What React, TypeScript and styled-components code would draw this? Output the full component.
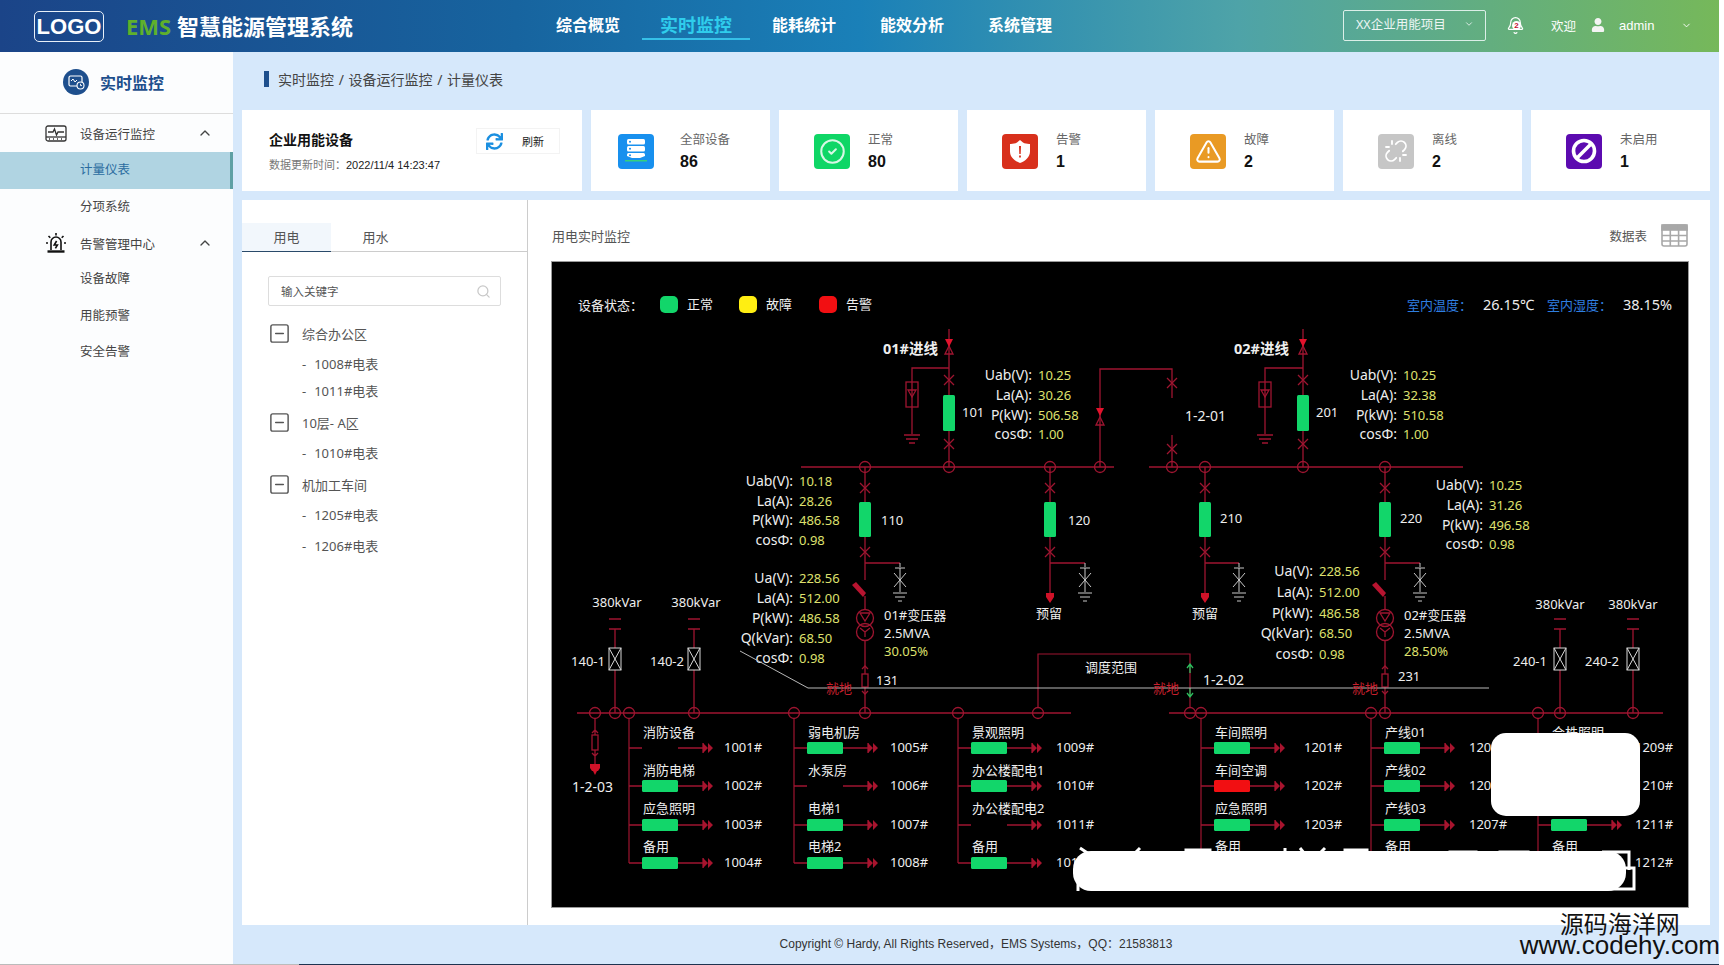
import React from 'react';
import styled, { createGlobalStyle } from 'styled-components';
import { Bell, ChevronDown, ChevronUp, CircleCheck, Search, SquareMinus, TriangleAlert, Unlink } from 'lucide-react';
import { FaSync, FaUser } from 'react-icons/fa';

const RED = '#9e1530';
const SANS = '"Noto Sans", "Noto Sans CJK SC", sans-serif';

const navItems = ['综合概览', '实时监控', '能耗统计', '能效分析', '系统管理'];

const ActivityIcon = () => (
    <svg width="22" height="17" viewBox="0 0 22 17" fill="none" stroke="#333" strokeWidth="1.3">
        <rect x="1" y="1" width="20" height="15" rx="2" />
        <path d="M1 12h20" />
        <path d="M3 7h5l1.5-3 2 6 1.5-3h6" />
        <path d="M4 14h1M8 14h1M12 14h1M16 14h1" />
    </svg>
);

const SirenIcon = () => (
    <svg width="22" height="22" viewBox="0 0 22 22" fill="none" stroke="#111" strokeWidth="1.6">
        <path d="M6 18V10a5 5 0 0 1 10 0v8" />
        <path d="M2.500 19.500h17" strokeWidth="2.400" />
        <path d="M11.600 9l-2.400 4h3.200l-2 3.400" />
        <path d="M11 1v2.500M3.500 4l1.800 1.800M18.500 4l-1.800 1.800M1 11h2M19 11h2" />
    </svg>
);

const GridIcon = () => (
    <svg width="27" height="23" viewBox="0 0 27 23" fill="none" stroke="#a8a8a8" strokeWidth="1.6">
        <rect x="1" y="1" width="25" height="21" rx="2" />
        <rect x="1" y="1" width="25" height="5" fill="#a8a8a8" />
        <path d="M9.300 1v21M17.600 1v21M1 11.500h25M1 17h25" />
    </svg>
);

const ServerIcon = () => (
    <svg width="22" height="26" viewBox="0 0 22 26" fill="#fff">
        <rect x="2" y="1" width="18" height="5.500" rx="1.500" />
        <rect x="2" y="8" width="18" height="5.500" rx="1.500" />
        <path d="M2 16.500a1.500 1.500 0 0 1 1.500-1.500h15a1.500 1.500 0 0 1 1.500 1.500V18l-5 2H7l-5-2z" />
        <rect x="0" y="22" width="22" height="1.500" fill="#35d07f" />
        <circle cx="5" cy="3.700" r="1" fill="#1890ee" />
        <circle cx="5" cy="10.700" r="1" fill="#1890ee" />
        <circle cx="5" cy="17.300" r="1" fill="#1890ee" />
    </svg>
);

const ShieldIcon = () => (
    <svg width="22" height="25" viewBox="0 0 22 25">
        <path d="M11 1l3 2.600c2 1.200 4.500 1.500 7 1.400v7.500C21 18 16.500 22 11 24 5.500 22 1 18 1 12.500V5c2.500.1 5-.2 7-1.400z" fill="#fff" />
        <path d="M10 7h2l-.3 8h-1.400zM10.100 16.500h1.800v2h-1.800z" fill="#d8301c" />
    </svg>
);

const BanIcon = () => (
    <svg width="26" height="26" viewBox="0 0 26 26" fill="none" stroke="#fff" strokeWidth="3.600">
        <circle cx="13" cy="13" r="10.500" />
        <path d="M6 20L20 6" />
    </svg>
);

const MonitorClockIcon = () => (
    <svg width="26" height="26" viewBox="0 0 26 26" fill="none">
        <circle cx="13" cy="13" r="13" fill="#1e4f8d" />
        <rect x="6" y="7" width="13" height="10" rx="1.500" stroke="#fff" strokeWidth="1.200" />
        <path d="M8 12l2-2 2 3 2-2" stroke="#fff" strokeWidth="1" />
        <circle cx="17.500" cy="16.500" r="3.500" fill="#1e4f8d" stroke="#fff" strokeWidth="1.100" />
        <path d="M17.500 14.800v1.800h1.500" stroke="#fff" strokeWidth=".9" />
    </svg>
);

const statCards: { label: string; value: number; color: string; icon: React.ReactNode }[] = [
    { label: '全部设备', value: 86, color: '#1890ee', icon: <ServerIcon /> },
    { label: '正常', value: 80, color: '#0fd666', icon: <CircleCheck size={27} color="#d8f7e5" strokeWidth={1.8} /> },
    { label: '告警', value: 1, color: '#d8301c', icon: <ShieldIcon /> },
    { label: '故障', value: 2, color: '#e99a24', icon: <TriangleAlert size={27} color="#fff" strokeWidth={1.8} /> },
    { label: '离线', value: 2, color: '#c6c6c6', icon: <Unlink size={24} color="#fff" strokeWidth={1.8} /> },
    { label: '未启用', value: 1, color: '#5c0bb0', icon: <BanIcon /> },
];

// ---- wiring diagram parts, coordinates are page pixels (see viewBox) ----

const Breaker = ({ x, y }: { x: number; y: number }) => (
    <path d={`M${x - 5} ${y - 5}L${x + 5} ${y + 5}M${x + 5} ${y - 5}L${x - 5} ${y + 5}`} />
);

const Node = ({ x, y = 713 }: { x: number; y?: number }) => (
    <circle cx={x} cy={y} r="5.500" fill="none" stroke={RED} strokeWidth="1.300" />
);

const StatusBar = ({ x, y, w, h, color = '#12d66a' }: { x: number; y: number; w: number; h: number; color?: string }) => (
    <rect x={x} y={y} width={w} height={h} rx="1.500" fill={color} stroke="none" />
);

const DataBlock = ({ right, rows }: { right: number; rows: [string, string, number][] }) => (
    <>
        {rows.map(([name, value, y]) => (
            <React.Fragment key={name}>
                <Txt x={right} y={y} textAnchor="end">{name}</Txt>
                <Txt x={right + 6} y={y} $size={13} $tone="#dfe06e">{value}</Txt>
            </React.Fragment>
        ))}
    </>
);

const Incoming = ({ x, side, title, titleEnd, tag }: { x: number; side: number; title: string; titleEnd: number; tag: string }) => (
    <>
        <g fill="none" stroke={RED} strokeWidth="1.300">
            <path d={`M${x} 329V467M${x} 368H${side}V434`} />
            <Breaker x={x} y={380} />
            <Breaker x={x} y={444} />
            <rect x={side - 6} y={382} width="12" height="25" />
            <path d={`M${side - 4} 390h8l-4 7z`} />
            <path d={`M${side - 8} 435h16M${side - 6} 439h12M${side - 3} 443h6`} />
            <path d={`M${x - 4} 354l4-8 4 8z`} />
        </g>
        <Node x={x} y={467} />
        <path d={`M${x - 4} 339h8l-4 8z`} fill="#e3122c" />
        <StatusBar x={x - 6} y={395} w={12} h={36} />
        <Txt x={titleEnd} y={354} textAnchor="end" $size={14.500} $bold>{title}</Txt>
        <Txt x={x + 13} y={417} $size={13}>{tag}</Txt>
    </>
);

const Feeder = ({ x, sw, tag, tagX, tagY, spare }: { x: number; sw: number; tag: string; tagX: number; tagY: number; spare?: boolean }) => (
    <>
        <g fill="none" stroke={RED} strokeWidth="1.300">
            <path d={`M${x} 467V${spare ? 595 : 580}M${x} 563H${sw}`} />
            <Breaker x={x} y={488} />
            <Breaker x={x} y={552} />
        </g>
        <Node x={x} y={467} />
        {spare && <path d={`M${x - 4} 593h8v4l-4 6-4-6z`} fill="#d01228" />}
        <g fill="none" stroke="#c9c9c9" strokeWidth="1">
            <path d={`M${sw} 563v4M${sw - 5} 568h10M${sw} 568v24`} />
            <path d={`M${sw - 6} 573L${sw + 6} 587M${sw + 6} 573L${sw - 6} 587`} />
            <path d={`M${sw - 7} 593h14M${sw - 5} 597h10M${sw - 2} 601h4`} />
        </g>
        <StatusBar x={x - 6} y={502} w={12} h={35} />
        <Txt x={tagX} y={tagY} $size={13}>{tag}</Txt>
    </>
);

const Transformer = ({ x, tag, load }: { x: number; tag: string; load: string }) => (
    <>
        <g fill="none" stroke={RED} strokeWidth="1.300">
            <circle cx={x} cy={618} r="8.500" />
            <circle cx={x} cy={632} r="8.500" />
            <path d={`M${x} 596V610M${x} 640V674M${x} 687V713`} />
            <path d={`M${x - 5} 613h10l-5 8zM${x} 632v5M${x} 632l-5-4M${x} 632l5-4`} />
            <rect x={x - 3} y={674} width="6" height="13" />
            <path d={`M${x - 3} 669l3-3 3 3M${x - 3} 691l3 3 3-3`} />
        </g>
        <Node x={x} />
        <path d={`M${x - 13} 585l4-3 10 11-3 4z`} fill="#b81430" />
        <Txt x={x + 19} y={620} $size={13}>{tag}</Txt>
        <Txt x={x + 19} y={638} $size={13}>2.5MVA</Txt>
        <Txt x={x + 19} y={656} $size={13} $tone="#dfe06e">{load}</Txt>
    </>
);

const Capacitor = ({ x, tag, tagEnd, labelX, labelY }: { x: number; tag: string; tagEnd: number; labelX: number; labelY: number }) => (
    <>
        <g fill="none" stroke={RED} strokeWidth="1.300">
            <path d={`M${x - 6} 619h12M${x - 6} 629h12M${x} 629V648M${x} 670V713`} />
        </g>
        <Node x={x} />
        <g fill="none" stroke="#d8d8d8" strokeWidth="1">
            <rect x={x - 6} y={648} width="12" height="22" />
            <path d={`M${x - 6} 648L${x + 6} 670M${x + 6} 648L${x - 6} 670`} />
        </g>
        <Txt x={labelX} y={labelY} textAnchor="middle" $size={13}>380kVar</Txt>
        <Txt x={tagEnd} y={666} textAnchor="end" $size={13}>{tag}</Txt>
    </>
);

type Load = { name?: string; no: string; off?: boolean; color?: string };

const rowY = [748, 786, 825, 863];
const nameY = [737, 775, 813, 851];

const LoadColumn = ({ x, loads, numX }: { x: number; loads: Load[]; numX: number }) => (
    <>
        <Node x={x} />
        <path d={`M${x} 718V${rowY[3]}`} fill="none" stroke={RED} strokeWidth="1.200" />
        {loads.map((load, i) => {
            const y = rowY[i];
            const bar = x + 13;
            return (
                <React.Fragment key={load.no}>
                    {load.name && <Txt x={bar + 1} y={nameY[i]} $size={13}>{load.name}</Txt>}
                    <path d={`M${x} ${y}h13M${bar + 36} ${y}H${bar + 64}M${bar + 61} ${y - 5}v10`} stroke={RED} strokeWidth="1.300" fill="none" />
                    <path d={`M${bar + 61} ${y - 5}l5 5-5 5zM${bar + 66} ${y - 5}l5 5-5 5z`} fill="#a8142e" />
                    {!load.off && <StatusBar x={bar} y={y - 6} w={36} h={12} color={load.color} />}
                    <Txt x={numX} y={y + 4} $size={13}>{load.no}</Txt>
                </React.Fragment>
            );
        })}
    </>
);

const Diagram = () => (
    <svg width="1136" height="645" viewBox="552 262 1136 645" style={{ display: 'block' }}>
        {/* legend */}
        <Txt x={578} y={310} $size={13}>{'设备状态\uFF1A'}</Txt>
        <rect x={660} y={296} width={18} height={17} rx={5} fill="#12d66a" />
        <Txt x={687} y={309} $size={13}>正常</Txt>
        <rect x={739} y={296} width={18} height={17} rx={5} fill="#ffee12" />
        <Txt x={766} y={309} $size={13}>故障</Txt>
        <rect x={819} y={296} width={18} height={17} rx={5} fill="#f20f12" />
        <Txt x={846} y={309} $size={13}>告警</Txt>

        <Txt x={1407} y={310} $size={13} $tone="#2f7fe0">{'室内温度\uFF1A'}</Txt>
        <Txt x={1483} y={310} $size={14.500}>26.15℃</Txt>
        <Txt x={1547} y={310} $size={13} $tone="#2f7fe0">{'室内湿度\uFF1A'}</Txt>
        <Txt x={1623} y={310} $size={14.500}>38.15%</Txt>

        {/* bus bars */}
        <path d="M801 467H1114M1149 467H1463M577 713H1071M1169 713H1663" stroke={RED} strokeWidth="1.500" fill="none" />

        <Incoming x={949} side={912} title="01#进线" titleEnd={938} tag="101" />
        <Incoming x={1303} side={1265} title="02#进线" titleEnd={1289} tag="201" />
        <DataBlock right={1032} rows={[['Uab(V):', '10.25', 380], ['La(A):', '30.26', 400], ['P(kW):', '506.58', 420], ['cosΦ:', '1.00', 439]]} />
        <DataBlock right={1397} rows={[['Uab(V):', '10.25', 380], ['La(A):', '32.38', 400], ['P(kW):', '510.58', 420], ['cosΦ:', '1.00', 439]]} />

        {/* bus tie */}
        <g fill="none" stroke={RED} strokeWidth="1.300">
            <path d="M1100 467V369H1172V398M1172 435V467" />
            <Breaker x={1172} y={383} />
            <Breaker x={1172} y={449} />
            <path d="M1096 425l4-8 4 8z" />
        </g>
        <Node x={1100} y={467} />
        <Node x={1172} y={467} />
        <path d="M1096 408h8l-4 8z" fill="#e3122c" />
        <Txt x={1185} y={421}>1-2-01</Txt>

        <Feeder x={865} sw={900} tag="110" tagX={881} tagY={525} />
        <Feeder x={1050} sw={1085} tag="120" tagX={1068} tagY={525} spare />
        <Feeder x={1205} sw={1239} tag="210" tagX={1220} tagY={523} spare />
        <Feeder x={1385} sw={1420} tag="220" tagX={1400} tagY={523} />
        <Txt x={1049} y={618} textAnchor="middle" $size={13}>预留</Txt>
        <Txt x={1205} y={618} textAnchor="middle" $size={13}>预留</Txt>

        <DataBlock right={793} rows={[['Uab(V):', '10.18', 486], ['La(A):', '28.26', 506], ['P(kW):', '486.58', 525], ['cosΦ:', '0.98', 545]]} />
        <DataBlock right={1483} rows={[['Uab(V):', '10.25', 490], ['La(A):', '31.26', 510], ['P(kW):', '496.58', 530], ['cosΦ:', '0.98', 549]]} />
        <DataBlock right={793} rows={[['Ua(V):', '228.56', 583], ['La(A):', '512.00', 603], ['P(kW):', '486.58', 623], ['Q(kVar):', '68.50', 643], ['cosΦ:', '0.98', 663]]} />
        <DataBlock right={1313} rows={[['Ua(V):', '228.56', 576], ['La(A):', '512.00', 597], ['P(kW):', '486.58', 618], ['Q(kVar):', '68.50', 638], ['cosΦ:', '0.98', 659]]} />

        <Transformer x={865} tag="01#变压器" load="30.05%" />
        <Txt x={876} y={685} $size={13}>131</Txt>
        <Transformer x={1385} tag="02#变压器" load="28.50%" />
        <Txt x={1398} y={681} $size={13}>231</Txt>

        {/* dispatch range */}
        <path d="M1038 708V654H1190V708" fill="none" stroke={RED} strokeWidth="1.200" />
        <Node x={1038} />
        <Node x={1190} />
        <Txt x={1085} y={672} $size={13}>调度范围</Txt>
        <path d="M1187 668l3-4 3 4M1190 664v9M1187 693l3 4 3-4M1190 688v9" fill="none" stroke="#2bbf5e" strokeWidth="1.300" />
        <Txt x={1203} y={685}>1-2-02</Txt>
        <path d="M740 651L808 688H1489" fill="none" stroke="#b8b8b8" strokeWidth="1" />
        <Txt x={826} y={693} $size={13} $tone="#c8202e">就地</Txt>
        <Txt x={1153} y={693} $size={13} $tone="#c8202e">就地</Txt>
        <Txt x={1352} y={693} $size={13} $tone="#c8202e">就地</Txt>

        <Capacitor x={615} tag="140-1" tagEnd={605} labelX={617} labelY={607} />
        <Capacitor x={694} tag="140-2" tagEnd={684} labelX={696} labelY={607} />
        <Capacitor x={1560} tag="240-1" tagEnd={1547} labelX={1560} labelY={609} />
        <Capacitor x={1633} tag="240-2" tagEnd={1619} labelX={1633} labelY={609} />

        {/* 1-2-03 */}
        <Node x={595} />
        <g fill="none" stroke={RED} strokeWidth="1.300">
            <path d="M595 718V735M595 750V765M592 733l3-3 3 3M592 753l3 3 3-3" />
            <rect x={592} y={735} width="6" height="15" />
        </g>
        <path d="M590 764h10v4l-2 3h-1l-2 4-2-4h-1l-2-3z" fill="#d01228" />
        <Txt x={572} y={792}>1-2-03</Txt>

        <LoadColumn
            x={629}
            numX={724}
            loads={[
                { name: '消防设备', no: '1001#', off: true },
                { name: '消防电梯', no: '1002#' },
                { name: '应急照明', no: '1003#' },
                { name: '备用', no: '1004#' },
            ]}
        />
        <LoadColumn
            x={794}
            numX={890}
            loads={[
                { name: '弱电机房', no: '1005#' },
                { name: '水泵房', no: '1006#', off: true },
                { name: '电梯1', no: '1007#' },
                { name: '电梯2', no: '1008#' },
            ]}
        />
        <LoadColumn
            x={958}
            numX={1056}
            loads={[
                { name: '景观照明', no: '1009#' },
                { name: '办公楼配电1', no: '1010#' },
                { name: '办公楼配电2', no: '1011#', off: true },
                { name: '备用', no: '1012#' },
            ]}
        />
        <LoadColumn
            x={1201}
            numX={1304}
            loads={[
                { name: '车间照明', no: '1201#' },
                { name: '车间空调', no: '1202#', color: '#f20f12' },
                { name: '应急照明', no: '1203#' },
                { name: '备用', no: '1204#' },
            ]}
        />
        <LoadColumn
            x={1371}
            numX={1469}
            loads={[
                { name: '产线01', no: '1205#' },
                { name: '产线02', no: '1206#' },
                { name: '产线03', no: '1207#' },
                { name: '备用', no: '1208#' },
            ]}
        />
        <LoadColumn
            x={1538}
            numX={1635}
            loads={[
                { name: '合株照明', no: '1209#' },
                { no: '1210#' },
                { no: '1211#' },
                { name: '备用', no: '1212#' },
            ]}
        />

        {/* smeared patches on the photographed screen */}
        <rect x={1491} y={733} width={149} height={83} rx={15} fill="#fff" />
        <g fill="none" stroke="#fff" strokeWidth="3">
            <path d="M1080 848l12 8M1140 848l-10 10M1186 853v-3h24v3M1285 848v8M1300 848l8 10M1325 848l-8 8M1345 855v-5h22v5M1450 856v-4h26v4M1500 856v-4h28v4M1602 852h27v18M1596 868h38v21h-38" />
            <path d="M1078 870v21" />
        </g>
        <rect x={1073} y={851} width={553} height={40} rx={18} fill="#fff" />
    </svg>
);

const App = (): JSX.Element => (
    <>
        <GlobalStyle />
        <Page>
            <Header>
                <Brand>
                    <LogoBox>LOGO</LogoBox>
                    <BrandTitle><em>EMS</em> 智慧能源管理系统</BrandTitle>
                </Brand>
                <Nav>
                    {navItems.map((item) => (
                        <NavItem key={item} $active={item === '实时监控'}>{item}</NavItem>
                    ))}
                </Nav>
                <HeaderRight>
                    <ProjectSelect>XX企业用能项目<ChevronDown size={10} /></ProjectSelect>
                    <BellWrap>
                        <Bell size={19} strokeWidth={1.5} color="#fff" />
                        <BellBadge>2</BellBadge>
                    </BellWrap>
                    <Welcome>欢迎</Welcome>
                    <FaUser size={14} color="#f4f4f4" />
                    <AdminName>admin</AdminName>
                    <AdminCaret><ChevronDown size={11} color="#fff" /></AdminCaret>
                </HeaderRight>
            </Header>

            <Body>
                <Sidebar>
                    <SideTitle><MonitorClockIcon />实时监控</SideTitle>
                    <MenuGroup $height={38}>
                        <ActivityIcon />
                        <span>设备运行监控</span>
                        <ChevronUp size={16} />
                    </MenuGroup>
                    <MenuItem $active>计量仪表</MenuItem>
                    <MenuItem>分项系统</MenuItem>
                    <MenuGroup $height={36}>
                        <SirenIcon />
                        <span>告警管理中心</span>
                        <ChevronUp size={16} />
                    </MenuGroup>
                    <MenuItem>设备故障</MenuItem>
                    <MenuItem>用能预警</MenuItem>
                    <MenuItem>安全告警</MenuItem>
                </Sidebar>

                <Content>
                    <Breadcrumb>实时监控 / 设备运行监控 / 计量仪表</Breadcrumb>

                    <Stats>
                        <SummaryCard>
                            <div>
                                <SummaryTitle>企业用能设备</SummaryTitle>
                                <SummaryTime>{'数据更新时间\uFF1A'}<b>2022/11/4 14:23:47</b></SummaryTime>
                            </div>
                            <RefreshButton><FaSync size={17} color="#1b8fe0" />刷新</RefreshButton>
                        </SummaryCard>
                        {statCards.map((card, i) => (
                            <StatCard key={card.label} $first={i === 0}>
                                <StatIcon $color={card.color}>{card.icon}</StatIcon>
                                <div>
                                    <StatLabel>{card.label}</StatLabel>
                                    <StatValue>{card.value}</StatValue>
                                </div>
                            </StatCard>
                        ))}
                    </Stats>

                    <Panel>
                        <TreePane>
                            <Tabs>
                                <Tab $active>用电</Tab>
                                <Tab>用水</Tab>
                            </Tabs>
                            <SearchBox>输入关键字<Search size={15} color="#c8c8c8" /></SearchBox>
                            <TreeList>
                                <TreeGroup><SquareMinus size={23} strokeWidth={1.5} />综合办公区</TreeGroup>
                                <TreeLeaf>1008#电表</TreeLeaf>
                                <TreeLeaf $tight>1011#电表</TreeLeaf>
                                <TreeGroup><SquareMinus size={23} strokeWidth={1.5} />10层- A区</TreeGroup>
                                <TreeLeaf>1010#电表</TreeLeaf>
                                <TreeGroup><SquareMinus size={23} strokeWidth={1.5} />机加工车间</TreeGroup>
                                <TreeLeaf>1205#电表</TreeLeaf>
                                <TreeLeaf>1206#电表</TreeLeaf>
                            </TreeList>
                        </TreePane>

                        <MonitorPane>
                            <MonitorHead>
                                <span>用电实时监控</span>
                                <TableLink>数据表<GridIcon /></TableLink>
                            </MonitorHead>
                            <DiagramFrame><Diagram /></DiagramFrame>
                        </MonitorPane>
                    </Panel>

                    <Footer>{'Copyright © Hardy, All Rights Reserved\uFF0CEMS Systems\uFF0CQQ\uFF1A21583813'}</Footer>
                </Content>
            </Body>
            <Watermark>
                <span>源码海洋网</span>
                <b>www.codehy.com</b>
            </Watermark>
        </Page>
    </>
);

const GlobalStyle = createGlobalStyle`
    html, body {
        margin: 0;
        padding: 0;
        background: #fff;
        overflow: hidden;
    }
    * {
        box-sizing: border-box;
    }
`;

const Page = styled.div`
    position: relative;
    width: 1724px;
    height: 965px;
    overflow: hidden;
    font-family: ${SANS};
    color: #444;
`;

const Header = styled.header`
    display: flex;
    align-items: center;
    width: 1719px;
    height: 52px;
    padding-left: 34px;
    background: linear-gradient(90deg, #1b4488 0%, #17649f 30%, #1a80b8 50%, #4ea3a8 72%, #76b85a 100%);
    color: #fff;
`;

const Brand = styled.div`
    display: flex;
    align-items: center;
    gap: 22px;
    width: 500px;
`;

const LogoBox = styled.div`
    width: 70px;
    height: 31px;
    border: 1px solid #e8f0f8;
    border-radius: 5px;
    font: bold 22px/29px "Liberation Sans", sans-serif;
    text-align: center;
`;

const BrandTitle = styled.div`
    padding-bottom: 3px;
    font-size: 22px;
    font-weight: 700;
    white-space: nowrap;

    em {
        font-style: normal;
        color: #5fb02c;
    }
`;

const Nav = styled.nav`
    display: flex;
    align-self: flex-start;
    width: 540px;
    margin-top: 13px;
`;

const NavItem = styled.div<{ $active?: boolean }>`
    width: 108px;
    height: 27px;
    font-size: ${(p) => (p.$active ? 18 : 16)}px;
    font-weight: 700;
    line-height: 24px;
    text-align: center;
    color: ${(p) => (p.$active ? '#2fcdec' : '#fff')};
    border-bottom: 2px solid ${(p) => (p.$active ? '#36c0e8' : 'transparent')};
`;

const HeaderRight = styled.div`
    display: flex;
    align-items: center;
    margin-left: 269px;
    padding-bottom: 2px;
`;

const ProjectSelect = styled.div`
    display: flex;
    align-items: center;
    justify-content: space-between;
    width: 143px;
    height: 31px;
    padding: 0 11px 3px 12px;
    border: 1px solid #dcefe8;
    border-radius: 2px;
    font-size: 12.500px;
    color: #eef6f4;
    white-space: nowrap;
`;

const BellWrap = styled.div`
    position: relative;
    display: flex;
    margin-left: 20px;
`;

const BellBadge = styled.span`
    position: absolute;
    left: 6px;
    top: 5px;
    width: 9px;
    height: 9px;
    border-radius: 50%;
    background: #fff;
    color: #c8102e;
    font: bold 8px/9px "Liberation Sans", sans-serif;
    text-align: center;
`;

const Welcome = styled.span`
    margin: 0 15px 0 26px;
    font-size: 12.500px;
`;

const AdminName = styled.span`
    margin-left: 14px;
    font: 13px "Liberation Sans", sans-serif;
`;

const AdminCaret = styled.span`
    display: flex;
    margin-left: 27px;
`;

const Body = styled.div`
    display: flex;
    width: 1719px;
    height: 913px;
`;

const Sidebar = styled.aside`
    flex: none;
    width: 233px;
    background: #fcfdfe;
    border-bottom: 1px solid #bbb;
`;

const SideTitle = styled.div`
    display: flex;
    align-items: center;
    gap: 11px;
    height: 62px;
    padding: 0 0 2px 63px;
    border-bottom: 1px solid #ddd;
    font-size: 16px;
    font-weight: 700;
    color: #1e4f8d;
`;

const MenuGroup = styled.div<{ $height: number }>`
    display: grid;
    grid-template-columns: 22px 1fr 16px;
    align-items: center;
    column-gap: 13px;
    height: ${(p) => p.$height}px;
    padding: 0 20px 0 45px;
    font-size: 12.500px;
    color: #444;
`;

const MenuItem = styled.div<{ $active?: boolean }>`
    height: 36.500px;
    padding-left: 80px;
    font-size: 12.500px;
    line-height: 36px;
    color: ${(p) => (p.$active ? '#2a6ca0' : '#444')};
    background: ${(p) => (p.$active ? '#b0d4e2' : 'transparent')};
    border-right: 3px solid ${(p) => (p.$active ? '#5fa0a5' : 'transparent')};
`;

const Content = styled.main`
    display: flex;
    flex-direction: column;
    flex: 1;
    padding: 0 9px;
    background: #d6e8fb;
`;

const Breadcrumb = styled.div`
    display: flex;
    align-items: center;
    height: 58px;
    padding: 0 0 4px 22px;
    font-size: 14px;
    word-spacing: 1px;
    color: #444;

    &::before {
        content: '';
        width: 5px;
        height: 16px;
        margin-right: 9px;
        background: #1e4f8d;
    }
`;

const Stats = styled.section`
    display: grid;
    grid-template-columns: 340px repeat(6, 179px);
    gap: 9px;
    height: 81px;
`;

const SummaryCard = styled.div`
    display: flex;
    justify-content: space-between;
    align-items: center;
    padding: 0 22px 0 27px;
    background: #fff;
`;

const SummaryTitle = styled.div`
    font-size: 14px;
    font-weight: 700;
    line-height: 19px;
    color: #111;
`;

const SummaryTime = styled.div`
    margin-top: 8px;
    font-size: 11px;
    line-height: 15px;
    color: #777;

    b {
        font: 11px "Liberation Sans", sans-serif;
        color: #222;
    }
`;

const RefreshButton = styled.div`
    display: flex;
    align-items: center;
    gap: 19px;
    width: 84px;
    height: 26px;
    padding-left: 9px;
    margin-bottom: 19px;
    border: 1px solid #f3f3f3;
    font-size: 11px;
    color: #222;
`;

const StatCard = styled.div<{ $first?: boolean }>`
    display: flex;
    align-items: center;
    gap: ${(p) => (p.$first ? 26 : 18)}px;
    padding-left: ${(p) => (p.$first ? 27 : 35)}px;
    background: #fff;
`;

const StatIcon = styled.div<{ $color: string }>`
    display: flex;
    align-items: center;
    justify-content: center;
    flex: none;
    width: 36px;
    height: 35px;
    margin-top: 1px;
    border-radius: 4px;
    background: ${(p) => p.$color};
`;

const StatLabel = styled.div`
    font-size: 12.500px;
    line-height: 17px;
    color: #666;
`;

const StatValue = styled.div`
    margin-top: 4px;
    font: bold 16px/19px "Liberation Sans", sans-serif;
    color: #111;
`;

const Panel = styled.section`
    display: flex;
    height: 725px;
    margin-top: 9px;
    background: #fff;
`;

const TreePane = styled.div`
    flex: none;
    width: 286px;
    padding-top: 23px;
    border-right: 1px solid #ccc;
    font-size: 13px;
    color: #555;
`;

const Tabs = styled.div`
    display: flex;
    height: 29px;
    margin-bottom: 24px;
    border-bottom: 1px solid #ccc;
`;

const Tab = styled.div<{ $active?: boolean }>`
    width: 89px;
    height: 29px;
    text-align: center;
    line-height: 28px;
    background: ${(p) => (p.$active ? '#f2f7fc' : 'transparent')};
    border-bottom: 1px solid ${(p) => (p.$active ? '#2a4a6a' : 'transparent')};
`;

const SearchBox = styled.div`
    display: flex;
    align-items: center;
    justify-content: space-between;
    width: 233px;
    height: 30px;
    margin-left: 26px;
    padding: 0 9px 0 12px;
    border: 1px solid #ddd;
    border-radius: 2px;
    font-size: 11.500px;
    color: #555;
`;

const TreeList = styled.div`
    margin-top: 12px;
`;

const TreeGroup = styled.div`
    display: flex;
    align-items: center;
    gap: 11px;
    height: 31px;
    padding-left: 26px;
    color: #555;
`;

const TreeLeaf = styled.div<{ $tight?: boolean }>`
    height: 31px;
    margin-top: ${(p) => (p.$tight ? -4 : 0)}px;
    padding-left: 60px;
    line-height: 31px;
    font-size: 13px;
    color: #555;

    &::before {
        content: '-';
        margin-right: 8px;
    }
`;

const MonitorPane = styled.div`
    flex: 1;
    padding: 0 22px 0 24px;
`;

const MonitorHead = styled.div`
    display: flex;
    align-items: center;
    justify-content: space-between;
    height: 62px;
    padding-top: 9px;
    font-size: 13px;
    color: #555;
`;

const TableLink = styled.div`
    display: flex;
    align-items: center;
    gap: 14px;
    font-size: 12.500px;
`;

const DiagramFrame = styled.div`
    width: 1136px;
    height: 645px;
    background: #000;
    box-shadow: 0 0 0 1px #9a9a9a;
`;

const Footer = styled.footer`
    height: 40px;
    margin: 0 -9px;
    font: 12px/39px "Liberation Sans", "Noto Sans CJK SC", sans-serif;
    text-align: center;
    color: #333;
    border-bottom: 1px solid;
    border-image: linear-gradient(90deg, #bbb 67px, #1f3350 67px) 1;
`;

const Watermark = styled.div`
    position: absolute;
    right: 4px;
    top: 910px;
    display: flex;
    flex-direction: column;
    align-items: center;
    color: #111;

    span {
        font-size: 24px;
        line-height: 28px;
    }

    b {
        margin-top: -5px;
        font: 26px/24px "Liberation Sans", sans-serif;
    }
`;

const Txt = styled.text<{ $size?: number; $tone?: string; $bold?: boolean }>`
    font-family: ${SANS};
    font-size: ${(p) => p.$size ?? 14}px;
    font-weight: ${(p) => (p.$bold ? 700 : 400)};
    fill: ${(p) => p.$tone ?? '#eeeeee'};
`;

export default App;
